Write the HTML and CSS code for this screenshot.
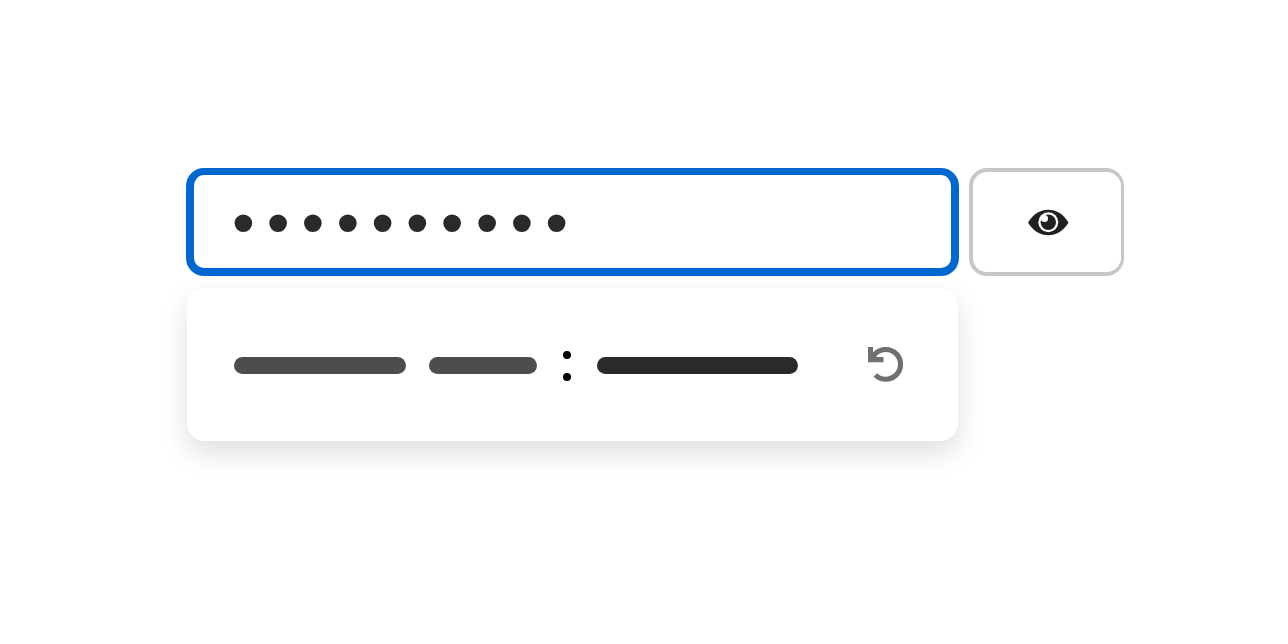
FILE: index.html
```
<!DOCTYPE html>
<html lang="en">
<head>
<meta charset="utf-8">
<meta name="viewport" content="width=device-width, initial-scale=1">
<title>Password field</title>
<link rel="stylesheet" href="styles.css">
</head>
<body>
<main class="page">
  <div class="field-row">
    <input class="password" type="password" value="password12" aria-label="Password">
    <button class="reveal" type="button" aria-label="Show password">
      <svg class="eye" viewBox="0 0 42 28" aria-hidden="true">
        <path fill="#212121" d="M1 14.500C6.500 5.500 13.500 1.700 21.300 1.700s14.700 3.800 20.200 12.800C36 23.500 29 27.300 21.300 27.300S6.500 23.500 1 14.500Z"/>
        <circle cx="21.300" cy="14.300" r="10" fill="#fff"/>
        <circle cx="21.300" cy="14.300" r="7.700" fill="#212121"/>
        <circle cx="17.500" cy="10.600" r="3.500" fill="#fff"/>
      </svg>
    </button>
  </div>
  <section class="suggestion" aria-label="Suggested password">
    <span class="bar bar-long"></span>
    <span class="bar bar-short"></span>
    <span class="colon"></span>
    <span class="bar bar-value"></span>
    <button class="refresh" type="button" aria-label="Generate another password">
      <svg class="undo" viewBox="0 0 36 37" aria-hidden="true">
        <path fill="none" stroke="#707070" stroke-width="5.100" d="M6.200 9.200A14.900 14.900 0 1 1 8.300 28"/>
        <path fill="#707070" d="M1 0H6V7L10 10H16.500V15.200H1Z"/>
      </svg>
    </button>
  </section>
</main>
</body>
</html>
```
FILE: styles.css
```
* { box-sizing: border-box; }

body {
  margin: 0;
  background: #fff;
  font-family: "Liberation Sans", sans-serif;
}

.page {
  padding: 168px 164px 168px 186px;
}

.field-row {
  display: grid;
  grid-template-columns: 1fr 155px;
  gap: 10px;
  height: 108px;
}

.password {
  width: 100%;
  min-width: 0;
  padding: 10px 32px 0;
  border: 8px solid #0067ce;
  border-top-width: 7px;
  border-radius: 18px;
  outline: none;
  background: #fff;
  color: #2a2a2a;
  font: 58px "Liberation Mono", monospace;
  -webkit-text-stroke: 2px #2a2a2a;
}

.reveal {
  display: flex;
  align-items: center;
  justify-content: center;
  padding: 0 0 0 2px;
  border: 4px solid #c7c7c7;
  border-right-width: 3px;
  border-radius: 18px;
  background: #fff;
}

.eye {
  width: 42px;
  height: 28px;
}

.suggestion {
  display: flex;
  align-items: center;
  height: 153px;
  margin: 12px 166px 0 1px;
  padding: 2px 55px 0 47px;
  border-radius: 18px;
  background: #fff;
  box-shadow: 0 12px 28px rgba(0, 0, 0, 0.13);
}

.bar {
  height: 17px;
  border-radius: 9px;
  background: #4d4d4d;
}

.bar-long { width: 172px; }

.bar-short {
  width: 108px;
  margin-left: 23px;
}

.bar-value {
  width: 201px;
  background: #2a2a2a;
}

.colon {
  display: flex;
  flex-direction: column;
  gap: 14px;
  margin: 0 26px;
}

.colon::before,
.colon::after {
  content: "";
  width: 8px;
  height: 8px;
  border-radius: 50%;
  background: #000;
}

.refresh {
  display: flex;
  margin-left: auto;
  padding: 0;
  border: 0;
  background: none;
}

.undo {
  width: 36px;
  height: 37px;
}
```
